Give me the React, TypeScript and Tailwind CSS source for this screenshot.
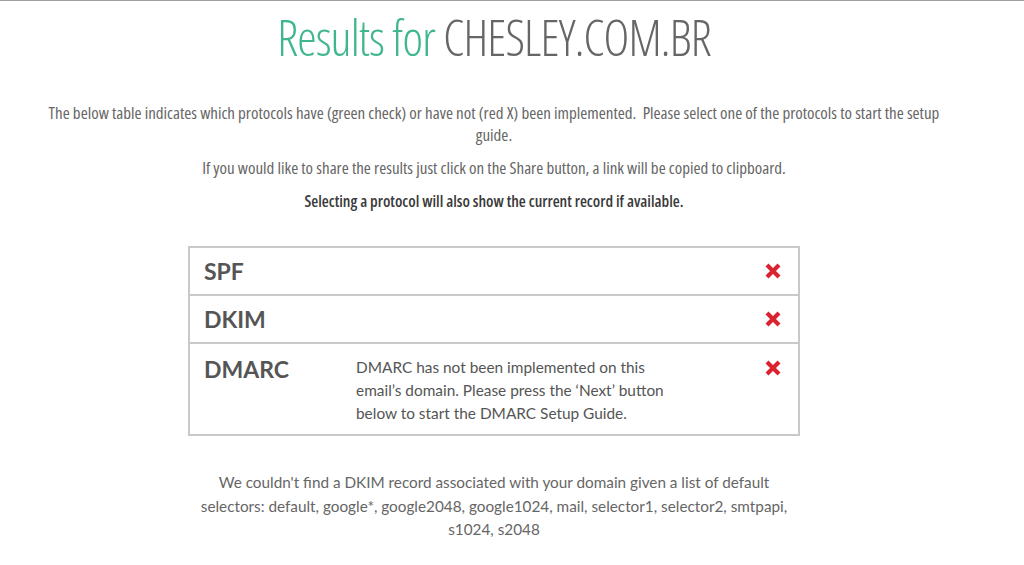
import React from "react";

const XIcon = () => (
  <svg width="18" height="18" viewBox="0 0 18 18" className="block">
    <path d="M3 3 L15 15 M15 3 L3 15" stroke="#d9232e" strokeWidth="4.2" strokeLinecap="butt" />
  </svg>
);

const cond: React.CSSProperties = { fontFamily: '"Open Sans", "DejaVu Sans Condensed", sans-serif', fontStretch: "75%" };
const lato: React.CSSProperties = { fontFamily: 'Lato, "Liberation Sans", sans-serif' };

export default function App() {
  return (
    <div className="w-[1024px] h-[565px] bg-white border-t border-[#a0a0a0] overflow-hidden">
      <div className="w-[988px] flex flex-col items-center">
        <h1 className="mt-[4px] text-[49px] leading-[64px] font-light tracking-[-0.85px]" style={cond}>
          <span className="text-[#3fb68b]">Results for</span>{" "}
          <span className="text-[#666666]">CHESLEY.COM.BR</span>
        </h1>
        <div className="mt-[33px] w-[905px] text-center text-[#666666] text-[17px] leading-[22px]" style={cond}>
          <p>
            The below table indicates which protocols have (green check) or have not (red X) been implemented.&nbsp; Please select one of the protocols to start the setup guide.
          </p>
          <p className="mt-[11px]">If you would like to share the results just click on the Share button, a link will be copied to clipboard.</p>
          <p className="mt-[11px] text-[#3a3a3a] text-[16px] font-semibold">Selecting a protocol will also show the current record if available.</p>
        </div>
        <div className="mt-[34px] w-[612px] border-2 border-[#c9c9c9] text-[#555555]" style={lato}>
          <div className="flex items-center h-[48px] pl-[14px] pr-[16px] border-b-2 border-[#c9c9c9]">
            <div className="flex-1 text-[23px] font-bold">SPF</div>
            <XIcon />
          </div>
          <div className="flex items-center h-[48px] pl-[14px] pr-[16px] border-b-2 border-[#c9c9c9]">
            <div className="flex-1 text-[23px] font-bold">DKIM</div>
            <XIcon />
          </div>
          <div className="flex items-start pl-[14px] pr-[16px] pt-[11px] pb-[9px]">
            <div className="w-[152px] text-[23px] font-bold leading-[28px]">DMARC</div>
            <div className="w-[318px] text-[15.4px] leading-[23px] pt-[1px]">
              DMARC has not been implemented on this email’s domain. Please press the ‘Next’ button below to start the DMARC Setup Guide.
            </div>
            <div className="flex-1 flex justify-end pt-[4px]">
              <XIcon />
            </div>
          </div>
        </div>
        <div className="mt-[35px] w-[610px] text-center text-[15.3px] leading-[23.5px] text-[#666666]" style={lato}>
          We couldn't find a DKIM record associated with your domain given a list of default selectors: default, google*, google2048, google1024, mail, selector1, selector2, smtpapi, s1024, s2048
        </div>
      </div>
    </div>
  );
}
